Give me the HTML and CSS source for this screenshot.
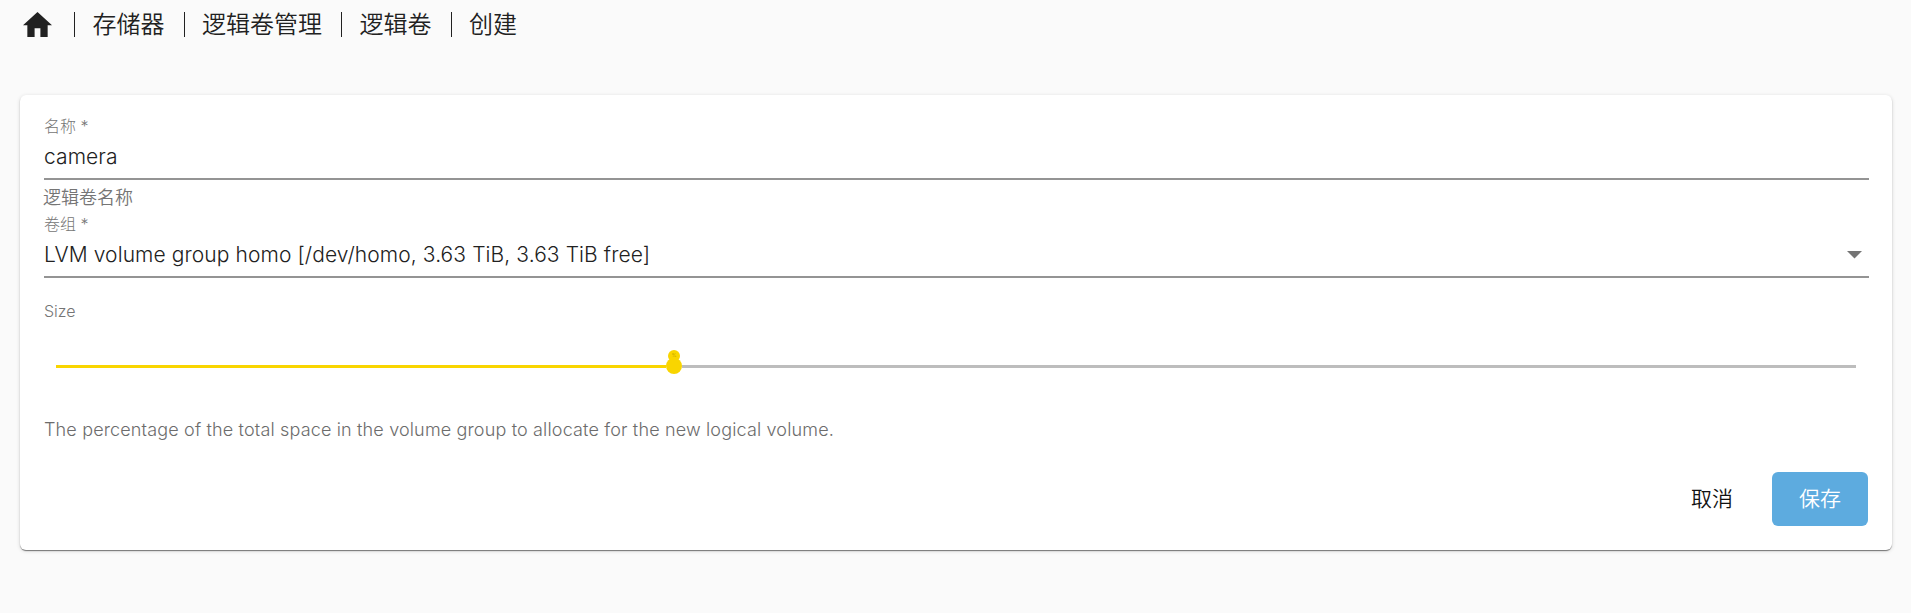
FILE: index.html
```
<!DOCTYPE html>
<html lang="zh-CN">
<head>
<meta charset="utf-8">
<title>创建</title>
<link rel="stylesheet" href="styles.css">
</head>
<body>
<nav class="breadcrumb">
  <svg class="home" viewBox="2 3 20 17" preserveAspectRatio="none"><path d="M10 20v-6h4v6h5v-8h3L12 3 2 12h3v8z"/></svg>
  <span class="crumb">存储器</span>
  <span class="crumb">逻辑卷管理</span>
  <span class="crumb">逻辑卷</span>
  <span class="crumb">创建</span>
</nav>
<main class="card">
  <div class="field">
    <div class="label">名称 *</div>
    <div class="value">camera</div>
  </div>
  <div class="hint hint-name">逻辑卷名称</div>
  <div class="field">
    <div class="label">卷组 *</div>
    <div class="value select"><span class="value-text">LVM volume group homo [/dev/homo, 3.63 TiB, 3.63 TiB free]</span><svg class="arrow" viewBox="0 0 15 7.5"><path d="M0 0h15L7.5 7.5z"/></svg></div>
  </div>
  <div class="label size-label">Size</div>
  <div class="slider">
    <div class="fill"></div>
    <div class="thumb"><div class="bubble">%</div></div>
    <div class="rest"></div>
  </div>
  <div class="hint hint-size">The percentage of the total space in the volume group to allocate for the new logical volume.</div>
  <div class="actions">
    <button class="btn">取消</button>
    <button class="btn primary">保存</button>
  </div>
</main>
</body>
</html>
```
FILE: styles.css
```
* { box-sizing: border-box; }
body {
  margin: 0;
  height: 613px;
  overflow: hidden;
  background: #fafafa;
  color: #212121;
  font-family: Inter, "Noto Sans CJK SC", sans-serif;
  font-weight: 300;
}
.breadcrumb {
  display: flex;
  align-items: center;
  height: 49px;
  margin-bottom: 46px;
  padding-left: 23px;
  font-size: 24px;
  font-weight: 350;
  line-height: 48px;
}
.home { width: 29px; height: 25px; margin-right: 22px; fill: #212121; }
.crumb { display: flex; align-items: center; margin-right: 19px; }
.crumb::before {
  content: "";
  width: 1px;
  height: 25px;
  margin-right: 17.5px;
  background: #212121;
}
.card {
  width: 1872px;
  height: 455px;
  margin: 0 0 0 20px;
  padding: 20px 23px 24px 24px;
  border-radius: 6px;
  background: #fff;
  box-shadow: 0 3px 1px -2px rgba(0,0,0,.2), 0 1px 1px rgba(0,0,0,.35), 0 1px 4px rgba(0,0,0,.14);
}
.field { height: 65px; border-bottom: 2px solid #949494; }
.label { height: 24px; font-size: 16px; line-height: 22px; color: #757575; }
.value { height: 36px; font-size: 21px; line-height: 36px; letter-spacing: .09px; }
.select { display: flex; align-items: center; justify-content: space-between; }
.arrow { width: 15px; height: 7.5px; margin-right: 7px; fill: #757575; }
.hint { font-size: 18px; color: #6c6c6c; white-space: nowrap; }
.hint-name { height: 33px; line-height: 35px; margin-left: -1px; font-weight: 350; color: #757575; }
.size-label { margin-top: 21px; line-height: 24px; }
.slider { display: flex; align-items: center; height: 20px; margin: 33px 13px 0 12px; }
.fill { width: 610px; height: 3px; background: #f9d500; }
.thumb { position: relative; width: 16px; height: 16px; border-radius: 50%; background: #f9d500; }
.bubble {
  position: absolute;
  left: 2px;
  top: -8px;
  width: 12px;
  height: 12px;
  border-radius: 50%;
  background: #f9d500;
  color: #b49a00;
  font-size: 5px;
  line-height: 11px;
  text-align: center;
}
.rest { flex: 1; height: 3px; background: #bdbdbd; }
.hint-size { height: 24px; margin-top: 42px; line-height: 24px; letter-spacing: .155px; }
.actions { display: flex; justify-content: flex-end; margin: 30px 1px 0 0; gap: 12px; }
.btn {
  width: 96px;
  height: 54px;
  padding: 0;
  border: 0;
  border-radius: 6px;
  background: none;
  color: #111;
  font-family: Inter, "Noto Sans CJK SC", sans-serif;
  font-size: 21px;
  font-weight: 350;
  line-height: 54px;
}
.primary { background: #5dabdf; color: #fff; }
```
